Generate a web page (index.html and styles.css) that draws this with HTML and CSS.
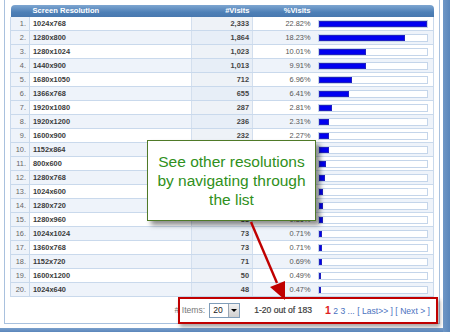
FILE: index.html
```html
<!DOCTYPE html>
<html>
<head>
<meta charset="utf-8">
<link rel="stylesheet" href="styles.css">
</head>
<body>
<div class="window">
  <div class="panel">
    <table class="grid">
      <thead>
        <tr>
          <th class="c-num"></th>
          <th class="c-res">Screen Resolution</th>
          <th class="c-vis">#Visits</th>
          <th class="c-pct">%Visits</th>
          <th class="c-bar"></th>
        </tr>
      </thead>
      <tbody>
        <tr><td class="c-num">1.</td><td class="c-res">1024x768</td><td class="c-vis">2,333</td><td class="c-pct">22.82%</td><td class="c-bar"><div class="track"><div class="fill" style="width:100%"></div></div></td></tr>
        <tr><td class="c-num">2.</td><td class="c-res">1280x800</td><td class="c-vis">1,864</td><td class="c-pct">18.23%</td><td class="c-bar"><div class="track"><div class="fill" style="width:79.9%"></div></div></td></tr>
        <tr><td class="c-num">3.</td><td class="c-res">1280x1024</td><td class="c-vis">1,023</td><td class="c-pct">10.01%</td><td class="c-bar"><div class="track"><div class="fill" style="width:43.9%"></div></div></td></tr>
        <tr><td class="c-num">4.</td><td class="c-res">1440x900</td><td class="c-vis">1,013</td><td class="c-pct">9.91%</td><td class="c-bar"><div class="track"><div class="fill" style="width:43.4%"></div></div></td></tr>
        <tr><td class="c-num">5.</td><td class="c-res">1680x1050</td><td class="c-vis">712</td><td class="c-pct">6.96%</td><td class="c-bar"><div class="track"><div class="fill" style="width:30.5%"></div></div></td></tr>
        <tr><td class="c-num">6.</td><td class="c-res">1366x768</td><td class="c-vis">655</td><td class="c-pct">6.41%</td><td class="c-bar"><div class="track"><div class="fill" style="width:28.1%"></div></div></td></tr>
        <tr><td class="c-num">7.</td><td class="c-res">1920x1080</td><td class="c-vis">287</td><td class="c-pct">2.81%</td><td class="c-bar"><div class="track"><div class="fill" style="width:12.3%"></div></div></td></tr>
        <tr><td class="c-num">8.</td><td class="c-res">1920x1200</td><td class="c-vis">236</td><td class="c-pct">2.31%</td><td class="c-bar"><div class="track"><div class="fill" style="width:10.1%"></div></div></td></tr>
        <tr><td class="c-num">9.</td><td class="c-res">1600x900</td><td class="c-vis">232</td><td class="c-pct">2.27%</td><td class="c-bar"><div class="track"><div class="fill" style="width:9.9%"></div></div></td></tr>
        <tr><td class="c-num">10.</td><td class="c-res">1152x864</td><td class="c-vis">232</td><td class="c-pct">2.27%</td><td class="c-bar"><div class="track"><div class="fill" style="width:9.9%"></div></div></td></tr>
        <tr><td class="c-num">11.</td><td class="c-res">800x600</td><td class="c-vis">165</td><td class="c-pct">1.61%</td><td class="c-bar"><div class="track"><div class="fill" style="width:7.1%"></div></div></td></tr>
        <tr><td class="c-num">12.</td><td class="c-res">1280x768</td><td class="c-vis">134</td><td class="c-pct">1.31%</td><td class="c-bar"><div class="track"><div class="fill" style="width:5.7%"></div></div></td></tr>
        <tr><td class="c-num">13.</td><td class="c-res">1024x600</td><td class="c-vis">101</td><td class="c-pct">0.99%</td><td class="c-bar"><div class="track"><div class="fill" style="width:4.3%"></div></div></td></tr>
        <tr><td class="c-num">14.</td><td class="c-res">1280x720</td><td class="c-vis">100</td><td class="c-pct">0.98%</td><td class="c-bar"><div class="track"><div class="fill" style="width:4.3%"></div></div></td></tr>
        <tr><td class="c-num">15.</td><td class="c-res">1280x960</td><td class="c-vis">88</td><td class="c-pct">0.86%</td><td class="c-bar"><div class="track"><div class="fill" style="width:3.8%"></div></div></td></tr>
        <tr><td class="c-num">16.</td><td class="c-res">1024x1024</td><td class="c-vis">73</td><td class="c-pct">0.71%</td><td class="c-bar"><div class="track"><div class="fill" style="width:3.1%"></div></div></td></tr>
        <tr><td class="c-num">17.</td><td class="c-res">1360x768</td><td class="c-vis">73</td><td class="c-pct">0.71%</td><td class="c-bar"><div class="track"><div class="fill" style="width:3.1%"></div></div></td></tr>
        <tr><td class="c-num">18.</td><td class="c-res">1152x720</td><td class="c-vis">71</td><td class="c-pct">0.69%</td><td class="c-bar"><div class="track"><div class="fill" style="width:3%"></div></div></td></tr>
        <tr><td class="c-num">19.</td><td class="c-res">1600x1200</td><td class="c-vis">50</td><td class="c-pct">0.49%</td><td class="c-bar"><div class="track"><div class="fill" style="width:2.1%"></div></div></td></tr>
        <tr><td class="c-num">20.</td><td class="c-res">1024x640</td><td class="c-vis">48</td><td class="c-pct">0.47%</td><td class="c-bar"><div class="track"><div class="fill" style="width:2%"></div></div></td></tr>
      </tbody>
    </table>
    <div class="pager">
      <span class="items-label"># Items:</span>
      <span class="select"><span class="select-val">20</span><span class="select-btn"><span class="caret"></span></span></span>
      <span class="range">1-20 out of 183</span>
      <span class="pages"><span class="cur">1</span> <span class="lnk">2</span> <span class="lnk">3</span> <span class="lnk">...</span> <span class="lnk">[ Last&gt;&gt; ]</span> <span class="lnk">[ Next &gt; ]</span></span>
    </div>
  </div>
  <div class="side"></div>
  <div class="bottom"></div>
</div>

<div class="callout">See other resolutions by navigating through the list</div>
<div class="redbox"></div>
<svg class="arrow" width="450" height="332" viewBox="0 0 450 332">
  <line x1="251" y1="222" x2="277" y2="283" stroke="#c00000" stroke-width="2.4"/>
  <polygon points="285,300 270,287 285,281" fill="#c00000"/>
</svg>
</body>
</html>
```
FILE: styles.css
```css
html, body {
  margin: 0;
  padding: 0;
  background: #ffffff;
}
body {
  width: 450px;
  height: 332px;
  overflow: hidden;
  position: relative;
  font-family: "Liberation Sans", Arial, sans-serif;
}
.window {
  display: grid;
  grid-template-columns: 443px 7px;
  grid-template-rows: 328px 4px;
  width: 450px;
  height: 332px;
}
.panel {
  grid-column: 1;
  grid-row: 1;
  margin-left: 4px;
  width: 436px;
  height: 324px;
  box-sizing: border-box;
  border: 1px solid #a9c1de;
  border-top: none;
  padding: 5px 5px 0 5px;
  background: #fff;
}
.side {
  grid-column: 2;
  grid-row: 1 / span 2;
  background: linear-gradient(90deg, #6f97c6, #5a86bb);
}
.bottom {
  grid-column: 1;
  grid-row: 2;
  background: linear-gradient(#7aa0cc, #5a86bb);
}
.grid {
  width: 424px;
  border-collapse: collapse;
  table-layout: fixed;
  font-size: 7.4px;
  color: #333;
}
.grid th {
  height: 12px;
  padding: 0 3px;
  color: #fff;
  font-weight: bold;
  font-size: 7.6px;
  background: linear-gradient(#7ea6d1, #4e80b7 60%, #4878af);
  text-align: left;
  line-height: 12px;
}
.grid thead th:first-child { border-top-left-radius: 4px; }
.grid thead th:last-child { border-top-right-radius: 4px; }
.grid th.c-res { padding-left: 3px; }
.grid th.c-vis, .grid th.c-pct { text-align: right; }
.grid td {
  height: 13px;
  padding: 0 3px;
  border-bottom: 1px solid #c9d9ec;
  line-height: 13px;
  white-space: nowrap;
  overflow: hidden;
}
.grid tbody tr:nth-child(even) td { background: #eef3fa; }
.c-num { width: 13px; }
.c-res { width: 156px; }
.c-vis { width: 55px; }
.c-pct { width: 55px; }
.grid td.c-num {
  text-align: right;
  color: #666;
  background: #eef3fa;
  border-right: 1px solid #c9d9ec;
  border-left: 1px solid #c9d9ec;
}
.grid td.c-res {
  font-weight: bold;
  color: #3a3a3a;
  border-right: 1px solid #d3dfee;
}
.grid td.c-vis {
  text-align: right;
  font-weight: bold;
  color: #444;
  background: #eef2f7;
  border-right: 1px solid #d3dfee;
}
.grid tbody tr:nth-child(even) td.c-vis { background: #e7eef7; }
.grid td.c-pct {
  text-align: right;
  color: #555;
}
.grid td.c-bar {
  padding: 0 5px 0 4px;
  border-right: 1px solid #c9d9ec;
}
.track {
  height: 6px;
  border: 1px solid #c4d5ea;
  background: #fff;
}
.fill {
  height: 6px;
  background: #0000f0;
  box-shadow: inset 0 0 0 1px #2020c0;
}
.pager {
  display: flex;
  align-items: center;
  justify-content: flex-end;
  height: 26px;
  padding-right: 4px;
  font-size: 8.6px;
  color: #666;
}
.items-label { margin-right: 4px; color: #777; }
.select {
  display: flex;
  align-items: stretch;
  height: 13px;
  width: 29px;
  border: 1px solid #7f9db9;
  background: #fff;
  margin-right: 14px;
}
.select-val {
  flex: 1;
  padding-left: 3px;
  line-height: 13px;
  color: #222;
  font-size: 8.6px;
}
.select-btn {
  width: 10px;
  background: linear-gradient(#f2f2f2, #cfcfcf);
  border-left: 1px solid #9aa6b4;
  display: flex;
  align-items: center;
  justify-content: center;
}
.caret {
  width: 0;
  height: 0;
  border-left: 3px solid transparent;
  border-right: 3px solid transparent;
  border-top: 3px solid #000;
}
.range {
  color: #3c3c3c;
  margin-right: 13px;
  -webkit-text-stroke: 0.2px #3c3c3c;
}
.pages { color: #4a72c0; word-spacing: 0; }
.cur { color: #e02020; font-weight: bold; font-size: 10.5px; }
.lnk { color: #4a72c0; }
.callout {
  position: absolute;
  left: 147px;
  top: 140px;
  width: 169px;
  height: 81px;
  box-sizing: border-box;
  border: 1.5px solid #4f7a28;
  background: #fff;
  box-shadow: 4px 4px 5px rgba(0,0,0,0.45);
  color: #2f9020;
  font-family: "Liberation Sans", Arial, sans-serif;
  font-size: 15.5px;
  line-height: 19px;
  text-align: center;
  padding: 11px 6px 0 6px;
}
.redbox {
  position: absolute;
  left: 178px;
  top: 297px;
  width: 260px;
  height: 27px;
  box-sizing: border-box;
  border: 2px solid #c00000;
  box-shadow: 2px 3px 4px rgba(0,0,0,0.35);
}
.arrow {
  position: absolute;
  left: 0;
  top: 0;
  pointer-events: none;
}
```
